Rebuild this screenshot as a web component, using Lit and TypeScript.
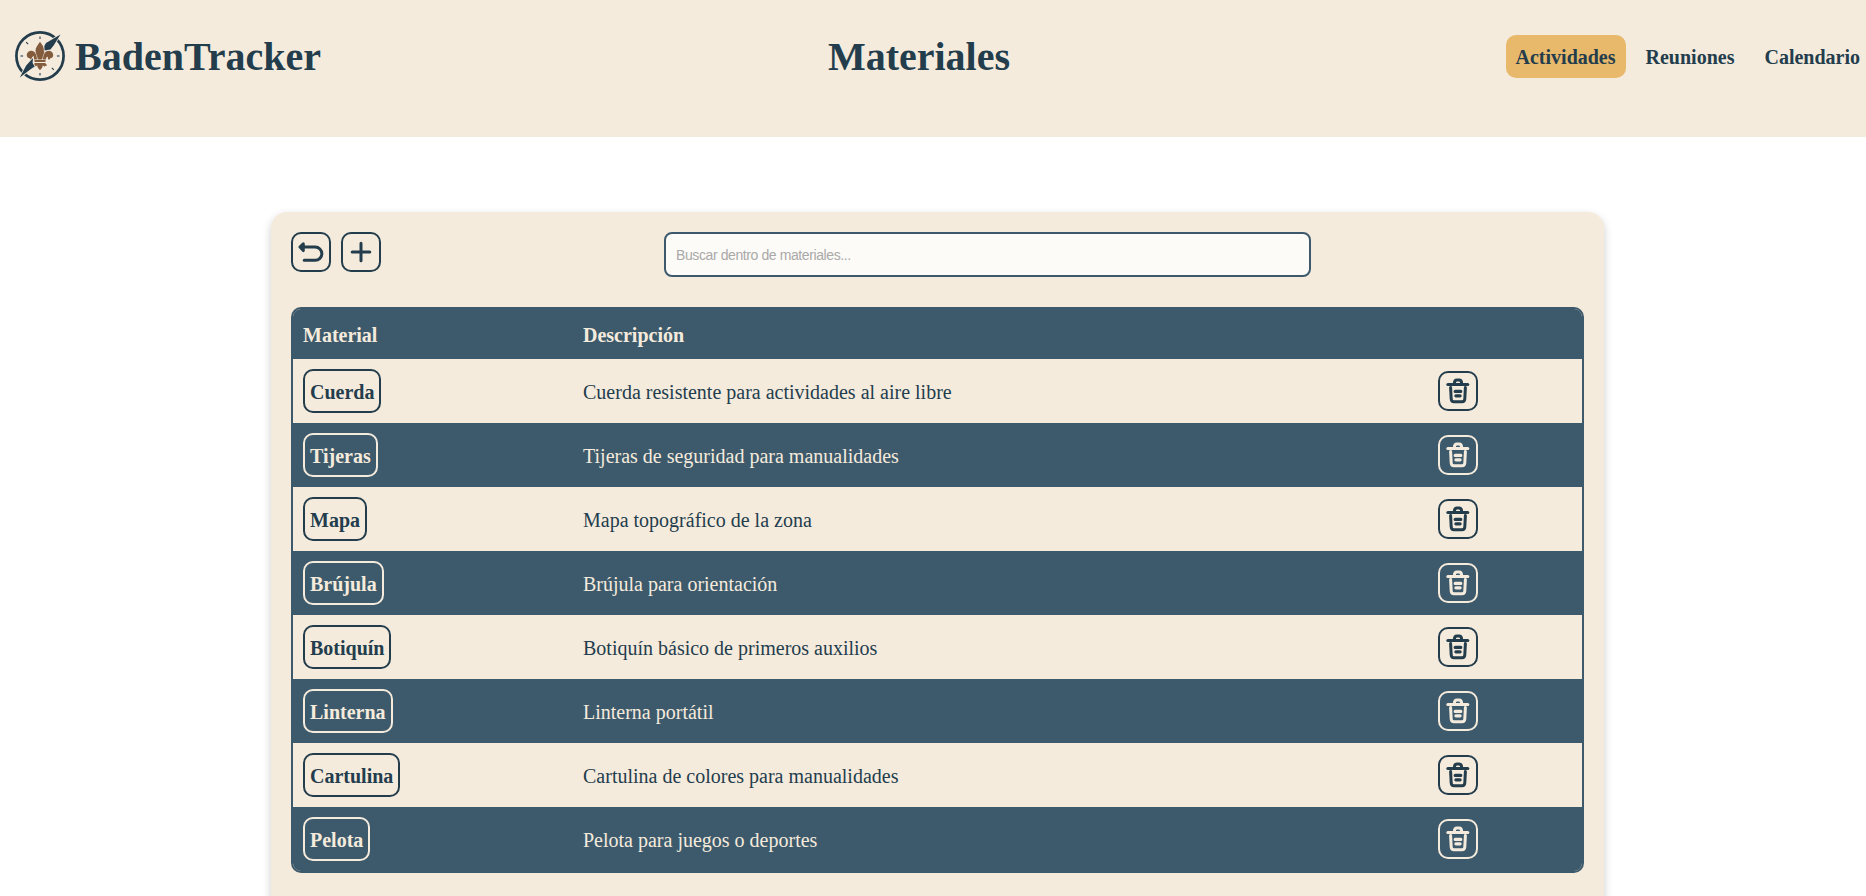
import { LitElement, html, css, svg } from "lit";
import { customElement } from "lit/decorators.js";

const materials = [
  ["Cuerda", "Cuerda resistente para actividades al aire libre"],
  ["Tijeras", "Tijeras de seguridad para manualidades"],
  ["Mapa", "Mapa topográfico de la zona"],
  ["Brújula", "Brújula para orientación"],
  ["Botiquín", "Botiquín básico de primeros auxilios"],
  ["Linterna", "Linterna portátil"],
  ["Cartulina", "Cartulina de colores para manualidades"],
  ["Pelota", "Pelota para juegos o deportes"],
];

const ticks = [0, 90, 135, 180, 270, 315].map(
  (a) => svg`<path d="M25 5.500v2.600" stroke="#233d4d" stroke-width="1.100" transform="rotate(${a} 25 25)"/>`
);

const logo = html`<svg class="logo" width="50" height="50" viewBox="0 0 50 50">
  <circle cx="25" cy="25" r="23.600" fill="none" stroke="#233d4d" stroke-width="2.700"/>
  ${ticks}
  <g fill="#835b3d">
    <path d="M25 10.800c2.500 3.400 4.500 6 4.500 8.800c0 3.200-2 5.400-2.300 8.800h-4.400c-.3-3.400-2.300-5.600-2.300-8.800c0-2.800 2-5.400 4.500-8.800Z"/>
    <path d="M22 28.500c-.2-5-2.200-8.500-5.400-8.700c-3-.1-5 2.200-4.800 4.700c.1 1.600 1.300 2.700 3 2.700c.3 2.300 2.500 1.500 2.300-.3c-.1-1.200.8-1.500 1.500-.3c.4.7.4 1.200.3 1.900Z"/>
    <path d="M28 28.500c.2-5 2.200-8.500 5.400-8.700c3-.1 5 2.200 4.800 4.700c-.1 1.600-1.300 2.700-3 2.700c-.3 2.300-2.500 1.500-2.300-.3c.1-1.200-.8-1.500-1.500-.3c-.4.7-.4 1.200-.3 1.900Z"/>
    <rect x="19.500" y="29" width="11" height="2"/>
    <path d="M19.500 32h11v.8c1 .3 1.400 1.200 1.300 2.200c-.7-.5-1.600-.4-2 .5c-1.500-.2-1.700-.8-2-1.700c.2 2-.8 3.600-2.800 5.400c-2-1.800-3-3.400-2.800-5.400c-.3.900-.5 1.500-2 1.700c-.4-.9-1.300-1-2-.5c-.1-1 .3-1.900 1.300-2.200Z"/>
  </g>
  <g fill="#233d4d" stroke="#f5ebdd" stroke-width="1.600" paint-order="stroke">
    <path d="M45.500 3.500 31 12 29.300 15l.3 4.500 5.800-.9 3.200-4.100Z"/>
    <path d="M4.800 46.500 11.200 34.500 18 27l-.4 5 2.100 3.600-3.400 2.200Z"/>
  </g>
</svg>`;

const trash = html`<svg width="26" height="26" viewBox="0 0 26 26" fill="none" stroke="currentColor" stroke-width="3" stroke-linecap="round" stroke-linejoin="round">
  <path d="M2.800 6.400h20"/>
  <path d="M9.400 5.500c0-2.200 1.100-3.500 2.500-3.500h2.200c1.400 0 2.500 1.300 2.500 3.500"/>
  <path d="M5.600 9.600l.6 11.400q.2 2.800 2.800 2.800h8q2.600 0 2.800-2.800l.6-11.400"/>
  <path d="M10.200 13.400h5.600M10.900 17.800h4.200" stroke-width="3.200"/>
</svg>`;

@customElement("app-root")
export class AppRoot extends LitElement {
  static styles = css`
    :host { display: block; height: 896px; overflow: hidden; background: #fff; color: #233d4d;
      font: 20px/23px "Liberation Serif", serif; }
    * { box-sizing: border-box; }
    svg { overflow: visible; }
    .header { height: 137px; background: #f5ebdd; display: grid; grid-template-columns: 1fr auto 1fr;
      align-items: start; font-weight: bold; }
    .brand { display: flex; align-items: flex-start; gap: 10px; padding: 31px 0 0 15px; }
    .logo { flex: none; }
    h1 { margin: 0; font-size: 40px; line-height: 52px; }
    .title { padding-top: 31px; margin-right: 28px; }
    nav { display: flex; gap: 10px; justify-content: flex-end; padding-top: 35px; margin-right: -4px; }
    .link { padding: 11px 10px 9px; border-radius: 10px; }
    .active { background: #e8b86b; }
    .card { width: 1333px; height: 800px; margin: 75px 0 0 271px; padding: 20px; border-radius: 16px;
      background: #f5ebdd; box-shadow: 0 4px 10px rgba(0, 0, 0, 0.2); }
    .toolbar { display: flex; gap: 10px; height: 75px; align-items: flex-start; }
    button { font: inherit; color: inherit; background: none; border: 2px solid currentColor;
      border-radius: 10px; padding: 0; }
    .icon { width: 40px; height: 40px; display: flex; align-items: center; justify-content: center; }
    .search { width: 647px; height: 45px; margin-left: 273px; padding: 0 10px; border: 2px solid #3d5a6c;
      border-radius: 8px; background: #fdfbf7; font: 14px "Liberation Sans", sans-serif; letter-spacing: -0.4px; outline: none; }
    .search::placeholder { color: #a9a9a9; opacity: 1; }
    .table { border: 2px solid #3d5a6c; border-radius: 10px; overflow: hidden; }
    .row { display: grid; grid-template-columns: 280px 1fr 144px; height: 64px; align-items: center; padding-left: 10px; }
    .row:nth-child(odd) { background: #3d5a6c; color: #f5ebdd; }
    .row.head { height: 50px; font-weight: bold; }
    .row span { padding-top: 2px; }
    .name { height: 44px; justify-self: start; padding: 2px 5px 0; font-weight: bold; }
  `;

  render() {
    return html`
      <header class="header">
        <div class="brand">${logo}<h1>BadenTracker</h1></div>
        <h1 class="title">Materiales</h1>
        <nav><a class="link active">Actividades</a><a class="link">Reuniones</a><a class="link">Calendario</a></nav>
      </header>
      <main class="card">
        <div class="toolbar">
          <button class="icon" aria-label="Volver"><svg width="26" height="26" viewBox="0 0 26 26" fill="none" stroke="currentColor" stroke-width="3" stroke-linecap="round" stroke-linejoin="round"><path d="M6.200 21.300h11a6.650 6.650 0 0 0 0-13.300H3M5.300 4.700 2 8l3.300 3.600Z"/></svg></button>
          <button class="icon" aria-label="Agregar"><svg width="26" height="26" viewBox="0 0 26 26" fill="none" stroke="currentColor" stroke-width="3" stroke-linecap="round"><path d="M13 4.200v17.600M4.200 13h17.600"/></svg></button>
          <input class="search" placeholder="Buscar dentro de materiales..." />
        </div>
        <section class="table">
          <div class="row head"><span>Material</span><span>Descripción</span></div>
          ${materials.map(([name, text]) => html`<div class="row">
            <button class="name">${name}</button><span>${text}</span>
            <button class="icon" aria-label="Eliminar">${trash}</button>
          </div>`)}
        </section>
      </main>`;
  }
}
